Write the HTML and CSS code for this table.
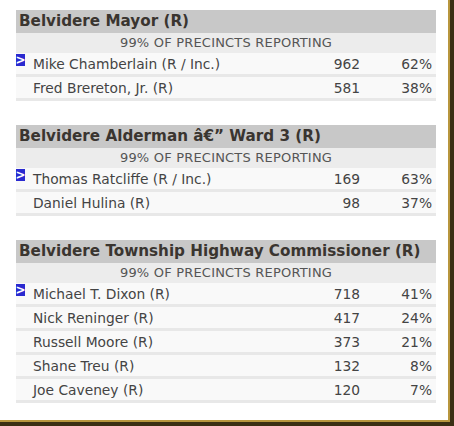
FILE: index.html
```html
<!DOCTYPE html>
<html>
<head>
<meta charset="utf-8">
<link rel="stylesheet" href="styles.css">
</head>
<body>
<div class="frame">
  <div class="races">
    <section class="race">
      <div class="title">Belvidere Mayor (R)</div>
      <div class="sub">99% OF PRECINCTS REPORTING</div>
      <div class="row"><span class="mark">&gt;</span><span class="name">Mike Chamberlain (R / Inc.)</span><span class="votes">962</span><span class="pct">62%</span></div>
      <div class="row"><span class="mark off"></span><span class="name">Fred Brereton, Jr. (R)</span><span class="votes">581</span><span class="pct">38%</span></div>
    </section>
    <section class="race">
      <div class="title">Belvidere Alderman â€” Ward 3 (R)</div>
      <div class="sub">99% OF PRECINCTS REPORTING</div>
      <div class="row"><span class="mark">&gt;</span><span class="name">Thomas Ratcliffe (R / Inc.)</span><span class="votes">169</span><span class="pct">63%</span></div>
      <div class="row"><span class="mark off"></span><span class="name">Daniel Hulina (R)</span><span class="votes">98</span><span class="pct">37%</span></div>
    </section>
    <section class="race">
      <div class="title">Belvidere Township Highway Commissioner (R)</div>
      <div class="sub">99% OF PRECINCTS REPORTING</div>
      <div class="row"><span class="mark">&gt;</span><span class="name">Michael T. Dixon (R)</span><span class="votes">718</span><span class="pct">41%</span></div>
      <div class="row"><span class="mark off"></span><span class="name">Nick Reninger (R)</span><span class="votes">417</span><span class="pct">24%</span></div>
      <div class="row"><span class="mark off"></span><span class="name">Russell Moore (R)</span><span class="votes">373</span><span class="pct">21%</span></div>
      <div class="row"><span class="mark off"></span><span class="name">Shane Treu (R)</span><span class="votes">132</span><span class="pct">8%</span></div>
      <div class="row"><span class="mark off"></span><span class="name">Joe Caveney (R)</span><span class="votes">120</span><span class="pct">7%</span></div>
    </section>
  </div>
</div>
</body>
</html>
```
FILE: styles.css
```css
html, body { margin: 0; padding: 0; background: #fff; }
body { width: 454px; height: 426px; overflow: hidden; }
.frame {
  box-sizing: border-box;
  width: 454px;
  height: 426px;
  border-right: 4px solid #3b2f14;
  border-bottom: 4px solid #3b2f14;
  box-shadow: inset -2px -2px 0 #b8963e;
  padding: 10px 0 0 16px;
}
.races { width: 420px; display: flex; flex-direction: column; gap: 24px; }
.race { background: #e8e8e8; padding-bottom: 3px; font-family: "DejaVu Sans", Verdana, sans-serif; }
.title {
  background: #c8c8c8;
  color: #3a3530;
  font-weight: bold;
  font-size: 15.2px;
  height: 23px;
  line-height: 23px;
  padding-left: 3px;
  white-space: nowrap;
}
.sub {
  background: #ececec;
  color: #555;
  font-size: 13px;
  letter-spacing: 0.2px;
  text-align: center;
  height: 20px;
  line-height: 20px;
}
.row {
  display: flex;
  align-items: center;
  background: #f9f9f9;
  height: 21px;
  margin-bottom: 3px;
  color: #444;
  font-size: 13.8px;
}
.row:last-child { margin-bottom: 0; }
.mark {
  flex: 0 0 9px;
  display: flex;
  align-items: center;
  justify-content: center;
  width: 9px;
  height: 12px;
  background: #2a2ad0;
  color: #fff;
  font-size: 12px;
  line-height: 12px;
  font-weight: bold;
  margin-left: 0;
  margin-right: 8px;
  align-self: flex-start;
  margin-top: 1px;
}
.mark.off { background: transparent; }
.name { flex: 1; }
.votes { width: 60px; text-align: right; }
.pct { width: 72px; text-align: right; padding-right: 4px; }
```
